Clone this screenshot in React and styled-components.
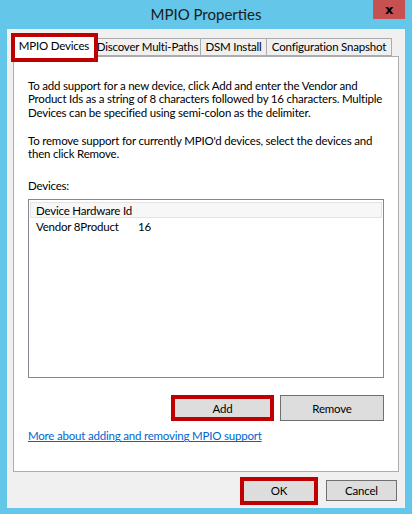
import React from "react"
import styled, { createGlobalStyle } from "styled-components"

const GlobalStyle = createGlobalStyle`
  html, body {
    margin: 0;
    padding: 0;
    background: #64c6e8;
  }
  body {
    font-family: Lato, "Noto Sans", sans-serif;
    font-size: 11.5px;
    letter-spacing: -0.2px;
    color: #000;
  }
`

const Window = styled.div`
  width: 412px;
  height: 514px;
  background: #64c6e8;
  display: flex;
  flex-direction: column;
  overflow: hidden;
`

const TitleBar = styled.div`
  height: 29px;
  display: grid;
  grid-template-columns: 1fr auto 1fr;
  align-items: start;
`

const Title = styled.div`
  grid-column: 2;
  font-size: 15px;
  letter-spacing: 0;
  line-height: 28px;
  color: #1a1a1a;
`

const CloseButton = styled.div`
  grid-column: 3;
  justify-self: end;
  margin-right: 7px;
  width: 32px;
  height: 19px;
  background: #c75050;
  display: flex;
  align-items: center;
  justify-content: center;
  font-family: "DejaVu Sans", sans-serif;
  font-weight: bold;
  font-size: 13px;
  line-height: 1;
  color: #000;
`

const Client = styled.div`
  margin: 0 7px 6px 7px;
  flex: 1;
  background: #f0f0f0;
  display: flex;
  flex-direction: column;
`

const TabStrip = styled.div`
  height: 27px;
  padding-left: 6px;
  display: flex;
  align-items: flex-end;
`

const Tab = styled.div`
  position: relative;
  box-sizing: border-box;
  width: ${(p) => p.$width}px;
  height: ${(p) => (p.$active ? 23 : 18)}px;
  margin-left: -1px;
  margin-bottom: ${(p) => (p.$active ? -1 : 0)}px;
  z-index: ${(p) => (p.$active ? 2 : 1)};
  background: ${(p) => (p.$active ? "#fff" : "#f0f0f0")};
  border: 1px solid #acacac;
  border-bottom: ${(p) => (p.$active ? "none" : "1px solid #acacac")};
  display: flex;
  align-items: ${(p) => (p.$active ? "flex-start" : "center")};
  justify-content: center;
  padding-top: ${(p) => (p.$active ? 4 : 0)}px;
  white-space: nowrap;
  line-height: 14px;

  &:first-child {
    margin-left: 0;
  }

  ${(p) =>
    p.$marked &&
    `
    &::after {
      content: "";
      position: absolute;
      top: -2px;
      left: -3px;
      right: -4px;
      bottom: -5px;
      border: 4px solid #c00000;
    }
  `}
`

const Panel = styled.div`
  margin: 0 6px;
  height: 416px;
  box-sizing: border-box;
  background: #fff;
  border: 1px solid #acacac;
  padding: 22px 14px 0 14px;
  display: flex;
  flex-direction: column;
`

const Paragraph = styled.p`
  margin: 0 0 ${(p) => p.$gap}px 0;
  line-height: 13.3px;
  white-space: nowrap;
`

const Label = styled.div`
  line-height: 13px;
  margin-bottom: 7px;
`

const ListBox = styled.div`
  height: 179px;
  box-sizing: border-box;
  border: 1px solid #828790;
  padding: 2px 1px;
  display: flex;
  flex-direction: column;
`

const ListHeader = styled.div`
  height: 16px;
  box-sizing: border-box;
  background: #f7f7f7;
  border: 1px solid #e3e3e3;
  padding-left: 5px;
  display: flex;
  align-items: center;
`

const ListRow = styled.div`
  height: 17px;
  padding-left: 6px;
  display: flex;
  align-items: center;
`

const Cell = styled.span`
  width: ${(p) => p.$width}px;
`

const ButtonRow = styled.div`
  margin-top: 17px;
  display: flex;
  justify-content: flex-end;
  gap: 6px;
`

const Button = styled.div`
  box-sizing: border-box;
  width: ${(p) => p.$width}px;
  height: ${(p) => p.$height}px;
  background: #dddddd;
  border: ${(p) => (p.$marked ? "4px solid #c00000" : "1px solid #707070")};
  display: flex;
  align-items: center;
  justify-content: center;
  line-height: 1;
`

const Link = styled.a`
  margin-top: 8px;
  line-height: 13px;
  color: #0066cc;
  text-decoration: underline;
  align-self: flex-start;
`

const Footer = styled.div`
  flex: 1;
  display: flex;
  align-items: center;
  justify-content: flex-end;
  gap: 8px;
  padding-right: 8px;
  padding-top: 1px;
`

const tabs = [
  { label: "MPIO Devices", width: 82, active: true },
  { label: "Discover Multi-Paths", width: 107 },
  { label: "DSM Install", width: 67 },
  { label: "Configuration Snapshot", width: 126 },
]

const App = () => {
  return (
    <Window>
      <GlobalStyle />
      <TitleBar>
        <Title>MPIO Properties</Title>
        <CloseButton>x</CloseButton>
      </TitleBar>
      <Client>
        <TabStrip>
          {tabs.map((t) => (
            <Tab
              key={t.label}
              $width={t.width}
              $active={t.active}
              $marked={t.active}
            >
              {t.label}
            </Tab>
          ))}
        </TabStrip>
        <Panel>
          <Paragraph $gap={15}>
            To add support for a new device, click Add and enter the Vendor and
            <br />
            Product Ids as a string of 8 characters followed by 16 characters. Multiple
            <br />
            Devices can be specified using semi-colon as the delimiter.
          </Paragraph>
          <Paragraph $gap={19}>
            To remove support for currently MPIO'd devices, select the devices and
            <br />
            then click Remove.
          </Paragraph>
          <Label>Devices:</Label>
          <ListBox>
            <ListHeader>Device Hardware Id</ListHeader>
            <ListRow>
              <Cell $width={102}>Vendor 8Product</Cell>
              <Cell>16</Cell>
            </ListRow>
          </ListBox>
          <ButtonRow>
            <Button $width={103} $height={26} $marked>
              Add
            </Button>
            <Button $width={104} $height={26}>
              Remove
            </Button>
          </ButtonRow>
          <Link href="#">More about adding and removing MPIO support</Link>
        </Panel>
        <Footer>
          <Button $width={78} $height={28} $marked>
            OK
          </Button>
          <Button $width={71} $height={21}>
            Cancel
          </Button>
        </Footer>
      </Client>
    </Window>
  )
}

export default App
